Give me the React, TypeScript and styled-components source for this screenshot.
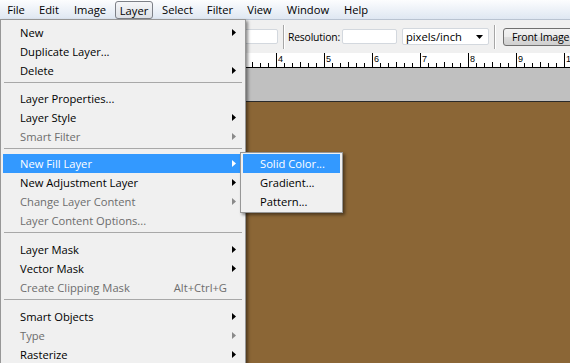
import React from 'react'
import styled, { createGlobalStyle } from 'styled-components'

const GlobalStyle = createGlobalStyle`
  html, body {
    margin: 0;
    padding: 0;
    background: #8b6636;
  }
  body {
    font-family: "Open Sans", "Noto Sans", "Liberation Sans", sans-serif;
    font-size: 11.2px;
  }
`

type MenuEntry =
  | { kind: 'item'; label: string; disabled?: boolean; sub?: boolean; shortcut?: string; active?: boolean }
  | { kind: 'sep'; space: number }

const titles: { label: string; w: number; active?: boolean }[] = [
  { label: 'File', w: 32 },
  { label: 'Edit', w: 34 },
  { label: 'Image', w: 48 },
  { label: 'Layer', w: 41, active: true },
  { label: 'Select', w: 45 },
  { label: 'Filter', w: 40 },
  { label: 'View', w: 39 },
  { label: 'Window', w: 58 },
  { label: 'Help', w: 38 },
]

const layerMenu: MenuEntry[] = [
  { kind: 'item', label: 'New', sub: true },
  { kind: 'item', label: 'Duplicate Layer...' },
  { kind: 'item', label: 'Delete', sub: true },
  { kind: 'sep', space: 9 },
  { kind: 'item', label: 'Layer Properties...' },
  { kind: 'item', label: 'Layer Style', sub: true },
  { kind: 'item', label: 'Smart Filter', sub: true, disabled: true },
  { kind: 'sep', space: 8 },
  { kind: 'item', label: 'New Fill Layer', sub: true, active: true },
  { kind: 'item', label: 'New Adjustment Layer', sub: true },
  { kind: 'item', label: 'Change Layer Content', sub: true, disabled: true },
  { kind: 'item', label: 'Layer Content Options...', disabled: true },
  { kind: 'sep', space: 10 },
  { kind: 'item', label: 'Layer Mask', sub: true },
  { kind: 'item', label: 'Vector Mask', sub: true },
  { kind: 'item', label: 'Create Clipping Mask', shortcut: 'Alt+Ctrl+G', disabled: true },
  { kind: 'sep', space: 10 },
  { kind: 'item', label: 'Smart Objects', sub: true },
  { kind: 'item', label: 'Type', sub: true, disabled: true },
  { kind: 'item', label: 'Rasterize', sub: true },
]

const fillMenu = [
  { label: 'Solid Color...', active: true },
  { label: 'Gradient...' },
  { label: 'Pattern...' },
]

function textColor(active?: boolean, disabled?: boolean) {
  if (active) return '#ffffff'
  if (disabled) return '#6d6d6d'
  return '#000000'
}

function Caret({ color }: { color: string }) {
  return (
    <svg width="4" height="7" viewBox="0 0 4 7">
      <path d="M0 0 L4 3.5 L0 7 Z" fill={color} />
    </svg>
  )
}

// inch marks every 48px, subdivisions every 8px
function Ruler() {
  const ticks = []
  for (let x = 84; x < 580; x += 8) {
    const step = (x - 84) % 48
    const top = step === 0 ? 0 : step === 24 ? 9 : 10
    ticks.push(<line key={x} x1={x + 0.5} x2={x + 0.5} y1={top} y2={14} stroke="#000" strokeWidth="1" />)
    if (step === 0 && x > 240) {
      ticks.push(
        <text key={'n' + x} x={x + 2} y={9} fontSize="9" fontFamily="Liberation Sans, sans-serif" fill="#000">
          {(x - 84) / 48}
        </text>,
      )
    }
  }
  return (
    <RulerStrip>
      <svg width="570" height="15">
        <rect width="570" height="15" fill="#fff" />
        {ticks}
        <line x1="0" x2="570" y1="14.5" y2="14.5" stroke="#000" />
      </svg>
    </RulerStrip>
  )
}

export default function App() {
  return (
    <Screen>
      <GlobalStyle />
      <MenuBar>
        {titles.map(t => (
          <MenuTitle key={t.label} $w={t.w} $active={t.active}>
            {t.label}
          </MenuTitle>
        ))}
      </MenuBar>

      <OptionsBar>
        <TextBox $w={35} />
        <Divider />
        <FieldLabel>Resolution:</FieldLabel>
        <TextBox $w={55} />
        <SelectBox>
          pixels/inch
          <svg width="7" height="4" viewBox="0 0 7 4">
            <path d="M0 0 L7 0 L3.5 4 Z" fill="#000" />
          </svg>
        </SelectBox>
        <Divider />
        <PushButton>Front Image</PushButton>
      </OptionsBar>

      <Ruler />
      <Pasteboard />
      <Canvas />

      <DropMenu>
        {layerMenu.map((entry, i) =>
          entry.kind === 'sep' ? (
            <Separator key={i} $space={entry.space} />
          ) : (
            <Row key={i} $active={entry.active} $disabled={entry.disabled}>
              <RowLabel>{entry.label}</RowLabel>
              {entry.shortcut && <Shortcut>{entry.shortcut}</Shortcut>}
              <CaretSlot>
                {entry.sub && (
                  <Caret color={entry.active ? '#ffffff' : entry.disabled ? '#8a8a8a' : '#000000'} />
                )}
              </CaretSlot>
              {entry.active && (
                <SubMenu>
                  {fillMenu.map(s => (
                    <SubRow key={s.label} $active={s.active}>
                      {s.label}
                    </SubRow>
                  ))}
                </SubMenu>
              )}
            </Row>
          ),
        )}
      </DropMenu>
    </Screen>
  )
}

const Screen = styled.div`
  position: relative;
  width: 570px;
  height: 363px;
  overflow: hidden;
  display: flex;
  flex-direction: column;
  background: #f0f0f0;
`

const MenuBar = styled.div`
  display: flex;
  align-items: stretch;
  height: 20px;
  box-sizing: border-box;
  flex-shrink: 0;
  background: linear-gradient(#fcfdfe, #dfe7f2);
  border-bottom: 1px solid #b9c3d1;
`

const MenuTitle = styled.div<{ $w: number; $active?: boolean }>`
  display: flex;
  align-items: center;
  justify-content: center;
  flex-shrink: 0;
  box-sizing: border-box;
  width: ${p => (p.$active ? p.$w - 3 : p.$w)}px;
  margin: ${p => (p.$active ? '1px 2px 0 1px' : '0')};
  padding-bottom: ${p => (p.$active ? '0' : '1px')};
  color: #000;
  white-space: nowrap;
  border: ${p => (p.$active ? '1px solid #7d8087' : 'none')};
  border-radius: 3px;
  background: ${p => (p.$active ? 'linear-gradient(#f5f6f8, #dde1e6)' : 'transparent')};
`

const OptionsBar = styled.div`
  display: flex;
  align-items: center;
  height: 33px;
  flex-shrink: 0;
  padding-left: 243px;
  background: #f0f0f0;

  & > * {
    flex-shrink: 0;
  }
`

const TextBox = styled.div<{ $w: number }>`
  width: ${p => p.$w}px;
  height: 15px;
  box-sizing: border-box;
  background: #fff;
  border: 1px solid #d3d8de;
  border-radius: 2px;
`

const Divider = styled.div`
  width: 1px;
  height: 24px;
  margin-left: 5px;
  background: #a6a6a6;
  border-right: 1px solid #fff;
`

const FieldLabel = styled.span`
  margin-left: 3px;
  margin-right: 2px;
  font-size: 10.4px;
  letter-spacing: -0.2px;
  color: #000;
  white-space: nowrap;
`

const SelectBox = styled.div`
  display: flex;
  align-items: center;
  justify-content: space-between;
  width: 87px;
  height: 17px;
  margin-left: 5px;
  padding: 0 5px 0 3px;
  box-sizing: border-box;
  background: #fff;
  border: 1px solid #d3d8de;
  border-radius: 2px;
  color: #000;
  white-space: nowrap;
`

const PushButton = styled.div`
  display: flex;
  align-items: center;
  height: 18px;
  margin-left: 7px;
  padding: 0 12px 0 8px;
  box-sizing: border-box;
  border: 1px solid #707070;
  border-radius: 3px;
  background: linear-gradient(#f2f2f2 0%, #ebebeb 50%, #dddddd 51%, #cfcfcf 100%);
  color: #000;
  font-size: 10.6px;
  letter-spacing: -0.2px;
  white-space: nowrap;
`

const RulerStrip = styled.div`
  height: 15px;
  flex-shrink: 0;
  line-height: 0;
`

const Pasteboard = styled.div`
  height: 33px;
  flex-shrink: 0;
  background: #c0c0c0;
  border-bottom: 1px solid #2a2a2a;
`

const Canvas = styled.div`
  flex: 1;
  background: #8b6636;
`

const DropMenu = styled.div`
  position: absolute;
  top: 19px;
  left: 0;
  width: 246px;
  bottom: -20px;
  box-sizing: border-box;
  padding: 3px 5px 0 2px;
  background: #f0f0f0;
  border: 1px solid #979797;
  box-shadow: 2px 2px 3px rgba(0, 0, 0, 0.45);
`

const Separator = styled.div<{ $space: number }>`
  height: 1px;
  margin: 2px -2px ${p => p.$space - 3}px 1px;
  background: #a8a8a8;
`

const Row = styled.div<{ $active?: boolean; $disabled?: boolean }>`
  position: relative;
  display: flex;
  align-items: center;
  height: 19px;
  padding-left: 17px;
  color: ${p => textColor(p.$active, p.$disabled)};
  background: ${p => (p.$active ? '#3399ff' : 'transparent')};
  white-space: nowrap;
`

const RowLabel = styled.span`
  flex: 1;
`

const Shortcut = styled.span``

const CaretSlot = styled.span`
  display: flex;
  align-items: center;
  width: 13px;
  padding-left: 5px;
  box-sizing: border-box;
`

const SubMenu = styled.div`
  position: absolute;
  top: -2px;
  left: 100%;
  width: 103px;
  box-sizing: border-box;
  padding: 1px 2px;
  background: #f0f0f0;
  border: 1px solid #979797;
  box-shadow: 2px 2px 3px rgba(0, 0, 0, 0.45);
`

const SubRow = styled.div<{ $active?: boolean }>`
  display: flex;
  align-items: center;
  height: 19px;
  padding-left: 17px;
  color: ${p => textColor(p.$active)};
  background: ${p => (p.$active ? '#3399ff' : 'transparent')};
  white-space: nowrap;
`
